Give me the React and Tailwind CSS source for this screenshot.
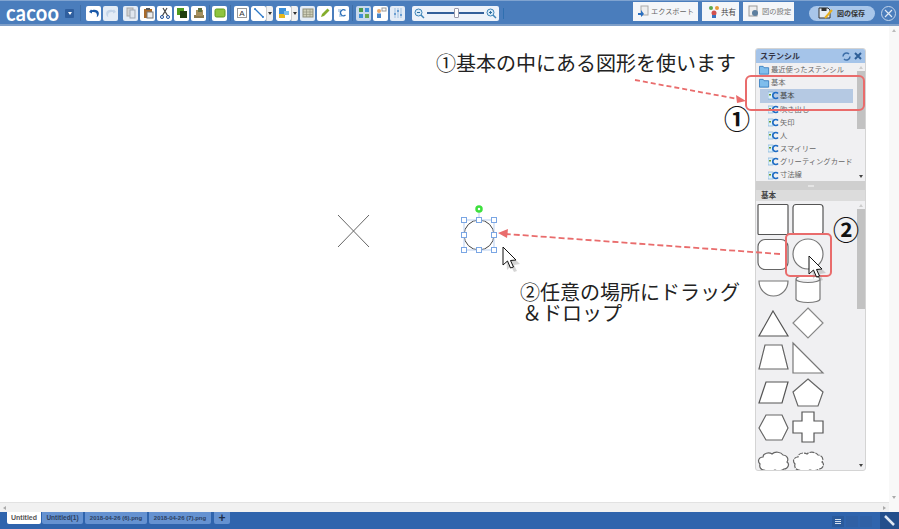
import React from "react";

const jp = { fontFamily: '"Noto Sans CJK JP","Noto Sans",sans-serif' };

function Btn({ w = "w-[15px]", children, dim, active }) {
  return (
    <div className={`${w} h-[15px] rounded-[2px] flex items-center justify-center ${active ? "bg-[#c9d9ec]" : dim ? "bg-[#e4ecf6]" : "bg-white"}`}>
      {children}
    </div>
  );
}
const I = ({ children }) => (
  <svg width="12" height="12" viewBox="0 0 12 12">{children}</svg>
);
const Caret = () => (
  <div className="w-[7px] h-[15px] flex items-center justify-center bg-[#f1f1f1] border-l border-[#ccc]">
    <div className="w-0 h-0 border-x-[2.5px] border-x-transparent border-t-[3px] border-t-[#333]" />
  </div>
);
const Sep = () => <div className="w-px h-[16px] bg-[#3f6fa8]" />;

function Toolbar() {
  return (
    <div className="h-[26px] shrink-0 bg-[#4a7dbc] border-t border-[#7fa3d0] border-b-2 border-b-[#7f9fc8] flex items-center relative pt-[1px]">
      <div className="w-[56px] ml-[6px] text-white font-bold text-[20px] leading-none tracking-[0.2px] -mt-[3px] scale-y-[1.15] overflow-visible whitespace-nowrap" style={{ fontFamily: "Lato,sans-serif" }}>cacoo</div>
      <div className="w-[9px] h-[9px] ml-[3px] rounded-[1px] bg-[#2f5f9f] flex items-center justify-center">
        <div className="w-0 h-0 border-x-[2.5px] border-x-transparent border-t-[3px] border-t-white" />
      </div>
      <div className="ml-[6px] mr-[5px]"><Sep /></div>
      <div className="flex gap-[2px]">
        <Btn><I><path d="M3 2.500 1 5l3 1.500V5c3-.5 5 .5 5 3.500 0 .7-.2 1.200-.5 1.800 2-1 2.700-3 2.200-4.800C10 3 7 2.300 4 3.300Z" fill="#1a58a8" /></I></Btn>
        <Btn dim><I><path d="M9 2.500 11 5 8 6.500V5C5 4.500 3 5.500 3 8.500c0 .7.2 1.200.5 1.800-2-1-2.700-3-2.200-4.800C2 3 5 2.300 8 3.300Z" fill="#c3d4e8" /></I></Btn>
      </div>
      <div className="ml-[5px] flex gap-[2px]">
        <Btn dim><I><rect x="2" y="1" width="6" height="8" fill="#d3d3d3" stroke="#a9a9a9" /><rect x="5" y="3" width="5" height="8" fill="#dfe6ee" stroke="#9fa9b5" /></I></Btn>
        <Btn><I><rect x="2" y="2" width="8" height="9" fill="#a86a2a" /><rect x="4" y="1" width="4" height="2" fill="#555" /><rect x="5" y="5" width="6" height="6" fill="#eee" stroke="#777" /></I></Btn>
        <Btn><I><circle cx="3" cy="10" r="1.500" fill="none" stroke="#1d4f9a" /><circle cx="9" cy="10" r="1.500" fill="none" stroke="#1d4f9a" /><path d="M3.500 8.500 8 1M8.500 8.500 4 1" stroke="#444" strokeWidth="1.200" /></I></Btn>
        <Btn><I><rect x="1" y="1" width="7" height="7" fill="#4f9a1f" /><rect x="4" y="4" width="7" height="7" fill="#1f3f10" /></I></Btn>
        <Btn><I><rect x="1" y="8" width="10" height="3" fill="#8a7a50" /><rect x="3" y="3" width="7" height="6" fill="#a58f5d" /><rect x="5" y="1" width="4" height="4" fill="#5f6f3f" /></I></Btn>
      </div>
      <div className="ml-[3px] mr-[2px]"><Sep /></div>
      <Btn><I><rect x="1" y="2" width="10" height="8" rx="1.500" fill="#8fc43f" stroke="#5f9a1f" /></I></Btn>
      <div className="ml-[3px] mr-[3px]"><Sep /></div>
      <div className="flex gap-[2px] items-center">
        <Btn><I><rect x="1.500" y="1.500" width="9" height="9" fill="none" stroke="#999" /><text x="6" y="9" textAnchor="middle" fontSize="8" fill="#333" fontFamily="Liberation Sans">A</text></I></Btn>
        <div className="flex rounded-[2px] overflow-hidden"><Btn><I><path d="M2 2 10 10" stroke="#2d79c8" strokeWidth="1.300" /><circle cx="2" cy="2" r="1" fill="#2d79c8" /><circle cx="10" cy="10" r="1" fill="#2d79c8" /></I></Btn><Caret /></div>
        <div className="flex rounded-[2px] overflow-hidden ml-[1px]"><Btn><I><rect x="1" y="1" width="7" height="6" fill="#3d8fd8" /><rect x="1" y="7" width="6" height="4" fill="#e8b820" /><rect x="6" y="4" width="5" height="4" fill="#7cc0ee" /></I></Btn><Caret /></div>
        <Btn dim><I><rect x="1" y="2" width="10" height="8" fill="#cfcfb8" stroke="#8f8f7a" /><path d="M1 5h10M1 7.500h10M4.500 2v8M8 2v8" stroke="#8f8f7a" strokeWidth=".6" /></I></Btn>
        <Btn><I><path d="M2 10 3 7 8.500 1.500 10.500 3.500 5 9Z" fill="#84ad2c" /></I></Btn>
        <Btn><I><path d="M2 2h3v3H2zM3 7h3v3H3z" fill="#bcd6ee" /><path d="M9.500 3.500A3 3 0 1 0 9.500 8" fill="none" stroke="#2d6fb8" strokeWidth="1.300" /></I></Btn>
      </div>
      <div className="ml-[3px] mr-[3px]"><Sep /></div>
      <div className="flex gap-[2px]">
        <Btn active><I><rect x="1" y="1" width="4" height="4" fill="#4b9a4b" /><rect x="7" y="1" width="4" height="4" fill="#3d8fd8" /><rect x="1" y="7" width="4" height="4" fill="#3d8fd8" /><rect x="7" y="7" width="4" height="4" fill="#6aa84f" /></I></Btn>
        <Btn><I><circle cx="4" cy="4" r="2" fill="#e9a86a" /><rect x="2" y="6.500" width="4" height="4.500" fill="#4a86c8" /><rect x="7" y="1" width="4" height="3" fill="none" stroke="#999" /></I></Btn>
        <Btn dim><I><path d="M3 1v10M6 1v10M9 1v10" stroke="#9dbfe0" /><path d="M2 7h2M5 4h2M8 8h2" stroke="#4f8cc9" strokeWidth="1.500" /></I></Btn>
      </div>
      <div className="ml-[7px] w-[87px] h-[15px] bg-[#eef3fa] rounded-[2px] flex items-center px-[2px] gap-[2px] relative">
        <svg width="11" height="11" viewBox="0 0 11 11"><circle cx="4.500" cy="4.500" r="3.500" fill="#d8eaf8" stroke="#3f85b8" /><path d="M7 7l3 3" stroke="#3f85b8" strokeWidth="1.500" /><path d="M3 4.500h3" stroke="#2f6f9f" /></svg>
        <div className="flex-1 h-[2px] bg-[#33609a] relative">
          <div className="absolute left-[27px] -top-[4px] w-[5px] h-[10px] bg-white border border-[#99a] rounded-[1px]" />
        </div>
        <svg width="11" height="11" viewBox="0 0 11 11"><circle cx="4.500" cy="4.500" r="3.500" fill="#d8eaf8" stroke="#3f85b8" /><path d="M7 7l3 3" stroke="#3f85b8" strokeWidth="1.500" /><path d="M3 4.500h3M4.500 3v3" stroke="#2f6f9f" /></svg>
      </div>
      <div className="ml-[4px]"><div className="w-px h-[11px] bg-[#2f6fb0]" /></div>
      <div className="flex-1" />
      <div className="flex gap-[4px] self-start mt-[0px]" style={jp}>
        <div className="w-[65px] h-[19px] bg-[#f4f6f9] flex items-center pl-[4px] gap-[2px] text-[7.200px] text-[#666] whitespace-nowrap">
          <svg width="12" height="13" viewBox="0 0 12 13"><rect x="4" y="1" width="7" height="9" fill="#eee" stroke="#aaa" /><path d="M1 8h3V5l3 4-3 3V10H1z" fill="#2a6fc0" /></svg>
          エクスポート
        </div>
        <div className="w-[37px] h-[19px] bg-[#f4f6f9] flex items-center pl-[6px] gap-[1px] text-[7.500px] text-[#444] whitespace-nowrap">
          <svg width="12" height="13" viewBox="0 0 12 13"><circle cx="3" cy="3" r="2" fill="#5aa84f" /><circle cx="9" cy="3" r="2" fill="#e89a3c" /><circle cx="6" cy="8" r="2.500" fill="#d0504f" /><rect x="4" y="10" width="4" height="3" fill="#3a74c0" /></svg>
          共有
        </div>
        <div className="w-[51px] h-[19px] bg-[#f4f6f9] flex items-center pl-[5px] gap-[2px] text-[7.300px] text-[#777] whitespace-nowrap">
          <svg width="12" height="13" viewBox="0 0 12 13"><rect x="1" y="1" width="8" height="10" fill="#eee" stroke="#999" /><circle cx="7" cy="8" r="3" fill="#5d7f9f" /></svg>
          図の設定
        </div>
      </div>
      <div className="w-[66px] h-[15px] ml-[15px] rounded-full bg-[#a8c6ea] flex items-center pl-[9px] gap-[3px] text-[7px] font-bold text-[#333] whitespace-nowrap" style={jp}>
        <svg width="16" height="12" viewBox="0 0 16 12"><path d="M1 1h9l2 2v8H1z" fill="#e8eef5" stroke="#333" /><rect x="3.500" y="1" width="5" height="3" fill="#333" /><path d="M7 11l7-8" stroke="#e8b020" strokeWidth="2" /></svg>
        図の保存
      </div>
      <div className="w-[15px] h-[15px] ml-[6px] mr-[3px] rounded-full border border-[#c4d6ec] flex items-center justify-center">
        <svg width="9" height="9" viewBox="0 0 9 9"><path d="M1 1l7 7M8 1 1 8" stroke="#dfe9f5" strokeWidth="1.200" /></svg>
      </div>
    </div>
  );
}

const Row = ({ children, sel }) => (
  <div className={`h-[13.200px] mr-[4px] ml-[1px] pl-[8px] flex items-center gap-[1px] text-[7.300px] leading-none whitespace-nowrap ${sel ? "bg-[#b5c9e3] text-[#444]" : "text-[#666]"}`}>
    <svg width="11" height="9" viewBox="0 0 11 9" className="shrink-0">
      <rect x="0" y="1" width="5" height="7" fill="#dff0f8" stroke="#6fa8d8" strokeWidth=".6" />
      <rect x="1" y="3" width="2" height="1.500" fill="#6b9a2f" />
      <path d="M10 2.500A3 3 0 1 0 10 6.500" fill="none" stroke="#1e6cc4" strokeWidth="1.700" />
    </svg>
    {children}
  </div>
);
const Folder = () => (
  <svg width="11" height="10" viewBox="0 0 12 10" className="shrink-0">
    <path d="M.5 1h4l1 1.500h5v7H.5z" fill="#7fbdec" stroke="#2f78bc" strokeWidth=".9" />
  </svg>
);

const cloud = "M3 15C0 12 2 8 6 8 6 4 12 3 15 5 18 2 24 3 26 6 30 6 32 10 30 13 33 15 31 20 27 20 24 22 20 22 18 21 14 23 9 22 7 21 4 21 2 18 3 15Z";
const sw = 1.2;
const shapes = [
  <rect x="1" y="0.500" width="30" height="30" rx="1" fill="#fff" stroke="#555" strokeWidth={sw} />,
  <rect x="1" y="0.500" width="30" height="30" rx="3" fill="#fff" stroke="#555" strokeWidth={sw} />,
  <rect x="1" y="0.500" width="30" height="30" rx="7" fill="#fff" stroke="#666" strokeWidth={sw} />,
  <circle cx="16" cy="15" r="15" fill="#fff" stroke="#777" strokeWidth={sw} />,
  <path d="M2 7h29a14.500 15 0 0 1-29 0Z" fill="#fff" stroke="#777" strokeWidth={sw} />,
  <path d="M4 5a12 3.500 0 0 1 24 0v20a12 3.500 0 0 1-24 0Z M4 5a12 3.500 0 0 0 24 0" fill="#fff" stroke="#777" strokeWidth={sw} />,
  <path d="M16 2 31 27H2Z" fill="#fff" stroke="#555" strokeWidth={sw} />,
  <path d="M16 -1 31 14 16 29 1 14Z" fill="#fff" stroke="#888" strokeWidth={sw} />,
  <path d="M8 1h17l6 24H2Z" fill="#fff" stroke="#666" strokeWidth={sw} />,
  <path d="M1 -1 31 29H1Z" fill="#fff" stroke="#777" strokeWidth={sw} />,
  <path d="M9 3h22l-6 21H2Z" fill="#fff" stroke="#555" strokeWidth={sw} />,
  <path d="M16 0 31 13 26 27H6L1 13Z" fill="#fff" stroke="#666" strokeWidth={sw} />,
  <path d="M9 1h16l6 13-6 12H9L2 14Z" fill="#fff" stroke="#666" strokeWidth={sw} />,
  <path d="M10 -2h12v9h9v12h-9v9H10v-9H1V7h9Z" fill="#fff" stroke="#555" strokeWidth={sw} />,
  <path d={cloud} fill="#fff" stroke="#666" strokeWidth={sw} />,
  <path d={cloud} fill="#fff" stroke="#666" strokeWidth={sw} strokeDasharray="5 1" />,
];

function ScrollV({ thumb, h }) {
  return (
    <div className={`w-[8px] shrink-0 flex flex-col items-center ${h}`}>
      <div className="h-[8px] flex items-center"><div className="w-0 h-0 border-x-[2.5px] border-x-transparent border-b-[3px] border-b-[#ccc]" /></div>
      <div className={`w-[8px] bg-[#c2c2c2] ${thumb}`} />
      <div className="flex-1" />
      <div className="h-[8px] flex items-center"><div className="w-0 h-0 border-x-[2.5px] border-x-transparent border-t-[3px] border-t-[#444]" /></div>
    </div>
  );
}

function Stencil() {
  return (
    <div className="absolute left-[755px] top-[22px] w-[111px] h-[423px] bg-[#f0f0f2] border border-[#d4d4d4] rounded-[3px] flex flex-col overflow-hidden" style={jp}>
      <div className="h-[14px] shrink-0 bg-[#a5c4e9] flex items-center pl-[4px] pr-[3px] text-[8px] font-bold text-[#334]">
        <span>ステンシル</span>
        <div className="flex-1" />
        <svg width="9" height="9" viewBox="0 0 9 9"><path d="M1 4.500a3.500 3.500 0 0 1 6-2.500M8 4.500a3.500 3.500 0 0 1-6 2.500" fill="none" stroke="#3d6ea8" strokeWidth="1.500" /></svg>
        <svg width="8" height="8" viewBox="0 0 8 8" className="ml-[3px]"><path d="M1 1l6 6M7 1 1 7" stroke="#2f5f98" strokeWidth="2" /></svg>
      </div>
      <div className="h-[118px] shrink-0 flex">
        <div className="flex-1 min-w-0 pl-[3px]">
          <div className="h-[13.200px] flex items-center gap-[1px] text-[7.300px] text-[#666] leading-none whitespace-nowrap"><Folder />最近使ったステンシル</div>
          <div className="h-[13.200px] flex items-center gap-[1px] text-[7.300px] text-[#666] leading-none whitespace-nowrap"><Folder />基本</div>
          <Row sel>基本</Row>
          <Row>吹き出し</Row>
          <Row>矢印</Row>
          <Row>人</Row>
          <Row>スマイリー</Row>
          <Row>グリーティングカード</Row>
          <Row>寸法線</Row>
        </div>
        <ScrollV thumb="h-[58px]" h="h-[117px]" />
      </div>
      <div className="h-[9px] shrink-0 bg-[#cfcfcf] flex items-center justify-center"><div className="w-[6px] h-[2px] border-y border-[#e4e4e4]" /></div>
      <div className="h-[11px] shrink-0 bg-[#dcdcdc] pl-[5px] text-[7.500px] font-bold text-[#444] leading-[10px]">基本</div>
      <div className="flex-1 min-h-0 flex">
        <div className="flex-1 pl-[1px] pt-[3px] grid grid-cols-[35px_35px] auto-rows-[35px]">
          {shapes.map((s, i) => (
            <svg key={i} width="34" height="32" viewBox="0 0 34 32" className="overflow-visible">{s}</svg>
          ))}
        </div>
        <ScrollV thumb="h-[100px]" h="h-[268px]" />
      </div>
    </div>
  );
}

const Cursor = ({ className }) => (
  <svg width="22" height="28" viewBox="0 0 22 28" className={`absolute ${className}`}>
    <path d="M5 5 19 19 13 20 16 26 13 27 10 21 6 25Z" fill="#888" opacity=".35" />
    <path d="M2 2V20L6.500 16 9.500 23 12.500 22 9.500 15.500 15 15Z" fill="#fff" stroke="#111" strokeWidth="1" />
  </svg>
);

const handles = [[0, 0], [15, 0], [30, 0], [0, 15], [30, 15], [0, 30], [15, 30], [30, 30]];

function Canvas() {
  return (
    <div className="flex-1 relative bg-white overflow-hidden">
      {/* X shape */}
      <svg width="34" height="34" viewBox="0 0 34 34" className="absolute left-[336px] top-[188px]">
        <path d="M2 1 33 33M33 1 2 33" stroke="#666" strokeWidth="1" />
      </svg>
      {/* selected circle */}
      <svg width="40" height="52" viewBox="0 0 40 52" className="absolute left-[459px] top-[179px]">
        <circle cx="20" cy="30" r="15" fill="#fff" stroke="#444" />
        <path d="M5 15H35V45H5Z" fill="none" stroke="#b9cff0" />
        <path d="M20 6v9" stroke="#b9cff0" />
        <circle cx="20" cy="4" r="2.500" fill="#fff" stroke="#3de03d" strokeWidth="2.500" />
        {handles.map(([x, y], i) => (
          <rect key={i} x={3 + x - 0.5} y={13 + y - 0.5} width="5" height="5" fill="#fff" stroke="#7aa6e4" />
        ))}
      </svg>
      <Cursor className="left-[501px] top-[219px]" />

      <div className="absolute left-[436px] top-[22px] text-[20px] leading-[30px] text-[#222] whitespace-nowrap" style={jp}>①基本の中にある図形を使います</div>
      <div className="absolute left-[520px] top-[255px] text-[20px] text-[#222] whitespace-nowrap flex flex-col" style={jp}>
        <span className="leading-[21px]">②任意の場所にドラッグ</span>
        <span className="leading-[21px] ml-[2px]">＆ドロップ</span>
      </div>

      <Stencil />

      {/* annotations over panel */}
      <div className="absolute left-[745px] top-[49px] w-[120px] h-[36px] border-2 border-[#e96c6c] rounded-[6px]" />
      <div className="absolute left-[785px] top-[207px] w-[47px] h-[44px] border-2 border-[#e96c6c] rounded-[5px]" />
      <div className="absolute left-[722px] top-[75px] w-[30px] text-center text-[26px] leading-[34px] font-bold text-[#111]" style={jp}>①</div>
      <div className="absolute left-[831px] top-[186px] w-[30px] text-center text-[26px] leading-[34px] font-bold text-[#111]" style={jp}>②</div>
      <svg width="899" height="477" viewBox="0 0 899 477" className="absolute left-0 top-0 pointer-events-none">
        <path d="M635 54 738 73" stroke="#e96c6c" strokeWidth="1.800" strokeDasharray="5 3" fill="none" />
        <path d="M746 75 736 69 737 77Z" fill="#e96c6c" />
        <path d="M780 228 506 208" stroke="#e96c6c" strokeWidth="1.800" strokeDasharray="6 3" fill="none" />
        <path d="M498 207 508 203 507 212Z" fill="#e96c6c" />
      </svg>
      <Cursor className="left-[807px] top-[228px]" />
      {/* vertical page scrollbar */}
      <div className="absolute right-0 top-0 bottom-0 w-[10px] bg-[#f8f8f8] flex flex-col items-center justify-between py-[3px]">
        <div className="w-0 h-0 border-x-[2.5px] border-x-transparent border-b-[3px] border-b-[#bbb]" />
        <div className="w-0 h-0 border-x-[2.5px] border-x-transparent border-t-[3px] border-t-[#aaa]" />
      </div>
    </div>
  );
}

function Tab({ children, active, w }) {
  return (
    <div className={`${w} h-[12px] self-start rounded-b-[2px] flex items-center justify-center font-bold whitespace-nowrap ${active ? "bg-white text-[#555]" : "bg-[#6592d1] text-[#2c3f5f]"}`} style={{ fontFamily: '"Liberation Sans",sans-serif' }}>
      {children}
    </div>
  );
}

export default function App() {
  return (
    <div className="w-[899px] h-[529px] flex flex-col overflow-hidden bg-white">
      <Toolbar />
      <Canvas />
      <div className="h-[10px] shrink-0 bg-[#f8f8f8] flex">
        <div className="w-[889px] bg-[#f1f1f1] border-t border-[#e2e2e2] flex items-center justify-between px-[3px]">
          <div className="w-0 h-0 border-y-[2.5px] border-y-transparent border-r-[3px] border-r-[#aaa]" />
          <div className="w-0 h-0 border-y-[2.5px] border-y-transparent border-l-[3px] border-l-[#aaa]" />
        </div>
      </div>
      <div className="h-[17px] shrink-0 bg-[#2f64ad] flex items-start pl-[7px] gap-[2px]">
        <Tab active w="w-[34px]"><span className="text-[7px]">Untitled</span></Tab>
        <div className="-ml-[1px]"><Tab w="w-[41px]"><span className="text-[6.500px]">Untitled(1)</span></Tab></div>
        <Tab w="w-[62px]"><span className="text-[6px]">2018-04-26 (6).png</span></Tab>
        <Tab w="w-[62px]"><span className="text-[6px]">2018-04-26 (7).png</span></Tab>
        <div className="ml-[1px]"><Tab w="w-[16px]"><span className="text-[12px] leading-none text-[#1f2f4a]">+</span></Tab></div>
        <div className="flex-1" />
        <div className="w-[12px] h-[11px] mt-[4px] bg-[#2a5a9c] flex flex-col items-center justify-center gap-[1px]">
          <div className="w-[6px] h-[1px] bg-[#d5e0ee]" />
          <div className="w-[6px] h-[1px] bg-[#d5e0ee]" />
          <div className="w-[6px] h-[1px] bg-[#d5e0ee]" />
        </div>
        <div className="w-[12px] h-[11px] mt-[4px] bg-[#2f60a5]" />
        <div className="w-[12px] h-[11px] mt-[4px] bg-[#2f60a5]" />
        <div className="w-[19px] h-[17px] ml-[6px] bg-[#234f8c] flex items-center justify-center">
          <svg width="11" height="11" viewBox="0 0 11 11"><path d="M1 1l9 9" stroke="#dfe8f3" strokeWidth="2.500" /></svg>
        </div>
      </div>
    </div>
  );
}
